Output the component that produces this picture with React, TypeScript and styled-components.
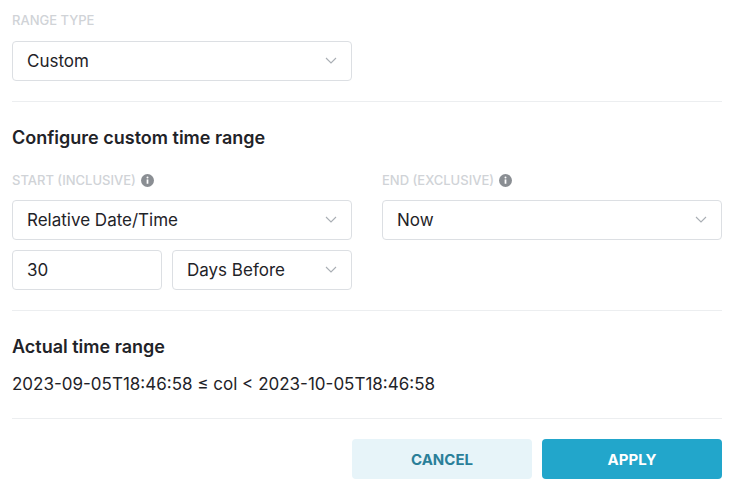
import { createGlobalStyle } from 'styled-components'
import styled from 'styled-components'

const Global = createGlobalStyle`
  body { margin: 0; background: #fff; font-family: Inter, "Noto Sans", sans-serif; color: #1f2328; }
`

const Page = styled.div`
  width: 734px;
  padding: 0 12px;
  box-sizing: border-box;
`

const Label = styled.div`
  display: flex;
  align-items: center;
  gap: 5px;
  height: 14px;
  font-size: 13px;
  font-weight: 500;
  color: #d0d3d7;
  text-transform: uppercase;
`

const Select = styled.div<{ $w: number }>`
  width: ${(p) => p.$w}px;
  height: 40px;
  box-sizing: border-box;
  border: 1px solid #dcdfe3;
  border-radius: 4px;
  display: flex;
  align-items: center;
  justify-content: space-between;
  padding: 0 14px;
  font-size: 17px;
  color: #1f2328;
`

const Divider = styled.hr`
  border: none;
  border-top: 1px solid #eceef0;
  margin: 0;
`

const Heading = styled.div`
  font-size: 18px;
  font-weight: 600;
  color: #1f2328;
`

const Row = styled.div`
  display: flex;
  gap: 10px;
`

const Col = styled.div`
  display: flex;
  flex-direction: column;
  gap: 10px;
`

const Section = styled.div<{ $pt: number; $pb: number; $gap: number }>`
  display: flex;
  flex-direction: column;
  padding: ${(p) => p.$pt}px 0 ${(p) => p.$pb}px;
  gap: ${(p) => p.$gap}px;
`

const Range = styled.div`
  font-size: 17px;
  color: #1f2328;
`

const Buttons = styled.div`
  display: flex;
  justify-content: flex-end;
  gap: 10px;
  padding-top: 20px;
`

const Button = styled.button<{ $primary?: boolean }>`
  width: 180px;
  height: 40px;
  border: none;
  border-radius: 4px;
  font-family: inherit;
  font-size: 15px;
  font-weight: 700;
  background: ${(p) => (p.$primary ? '#22a6cb' : '#e7f4f9')};
  color: ${(p) => (p.$primary ? '#fff' : '#2a7f99')};
`

const Chevron = () => (
  <svg width="12" height="8" viewBox="0 0 12 8" fill="none">
    <path d="M1 1l5 5 5-5" stroke="#a9aeb4" strokeWidth="1.1" />
  </svg>
)

const Info = () => (
  <svg width="13" height="13" viewBox="0 0 12 12">
    <circle cx="6" cy="6" r="6" fill="#8a8e93" />
    <rect x="5.2" y="5" width="1.6" height="4" fill="#fff" />
    <circle cx="6" cy="3.3" r="0.9" fill="#fff" />
  </svg>
)

const Sel = ({ w, text }: { w: number; text: string }) => (
  <Select $w={w}>
    {text}
    <Chevron />
  </Select>
)

export default function App() {
  return (
    <Page>
      <Global />
      <Section $pt={13} $pb={20} $gap={14}>
        <Label>Range type</Label>
        <Sel w={340} text="Custom" />
      </Section>
      <Divider />
      <Section $pt={25} $pb={20} $gap={25}>
        <Heading>Configure custom time range</Heading>
        <Row style={{ gap: 30 }}>
          <Col>
            <Label>
              Start (inclusive) <Info />
            </Label>
            <Col style={{ paddingTop: 3 }}>
              <Sel w={340} text="Relative Date/Time" />
              <Row>
                <Select $w={150}>30</Select>
                <Sel w={180} text="Days Before" />
              </Row>
            </Col>
          </Col>
          <Col>
            <Label>
              End (exclusive) <Info />
            </Label>
            <Col style={{ paddingTop: 3 }}>
              <Sel w={340} text="Now" />
            </Col>
          </Col>
        </Row>
      </Section>
      <Divider />
      <Section $pt={25} $pb={24} $gap={17}>
        <Heading>Actual time range</Heading>
        <Range>2023-09-05T18:46:58 ≤ col &lt; 2023-10-05T18:46:58</Range>
      </Section>
      <Divider />
      <Buttons>
        <Button>CANCEL</Button>
        <Button $primary>APPLY</Button>
      </Buttons>
    </Page>
  )
}
